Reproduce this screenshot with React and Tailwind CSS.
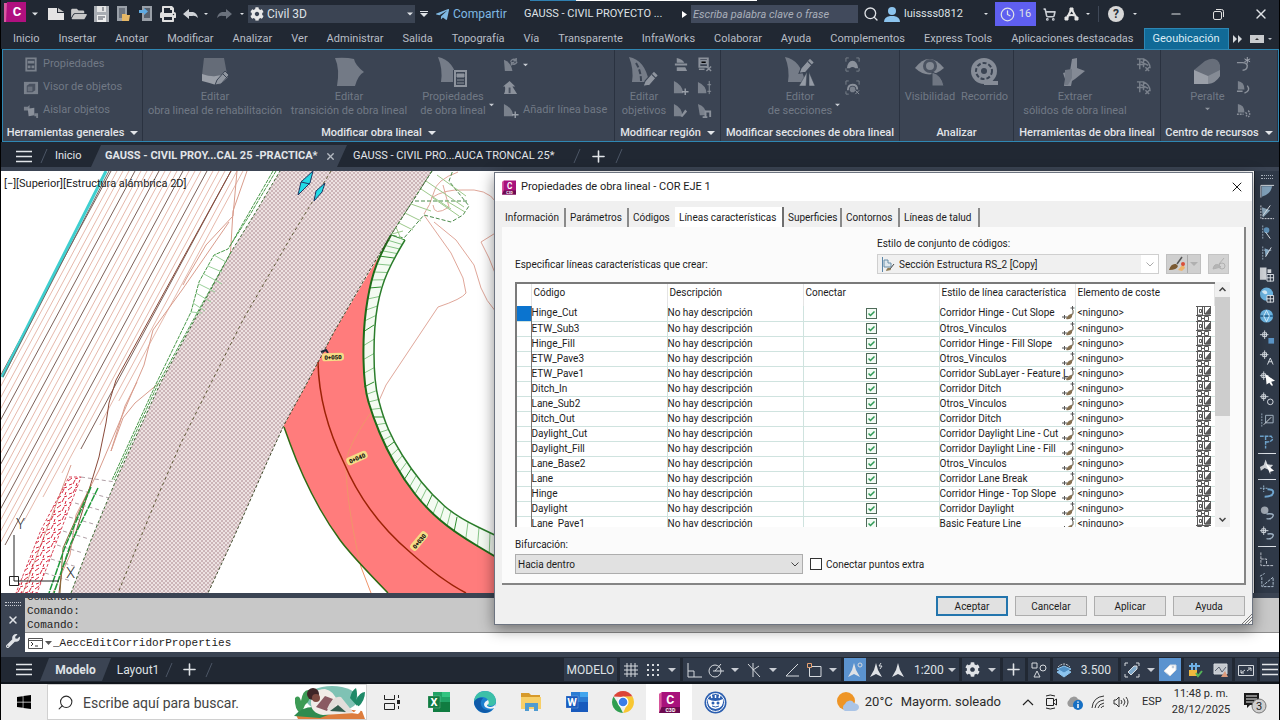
import React, { useState } from "react";
import {
  FaCog,
  FaFolderOpen,
  FaPrint,
  FaSave,
  FaTelegramPlane,
  FaUser,
  FaWindows,
  FaWrench,
} from "react-icons/fa";
import { Clock, Minus, Plus, Search, ShoppingCart, X } from "lucide-react";

const menuTabs = [
  "Inicio", "Insertar", "Anotar", "Modificar", "Analizar", "Ver", "Administrar", "Salida", "Topografía", "Vía",
  "Transparente", "InfraWorks", "Colaborar", "Ayuda", "Complementos", "Express Tools", "Aplicaciones destacadas",
];

const featureLines = [
  ["Hinge_Cut", "Corridor Hinge - Cut Slope"],
  ["ETW_Sub3", "Otros_Vinculos"],
  ["Hinge_Fill", "Corridor Hinge - Fill Slope"],
  ["ETW_Pave3", "Otros_Vinculos"],
  ["ETW_Pave1", "Corridor SubLayer - Feature L"],
  ["Ditch_In", "Corridor Ditch"],
  ["Lane_Sub2", "Otros_Vinculos"],
  ["Ditch_Out", "Corridor Ditch"],
  ["Daylight_Cut", "Corridor Daylight Line - Cut"],
  ["Daylight_Fill", "Corridor Daylight Line - Fill"],
  ["Lane_Base2", "Otros_Vinculos"],
  ["Lane", "Corridor Lane Break"],
  ["Hinge", "Corridor Hinge - Top Slope"],
  ["Daylight", "Corridor Daylight"],
  ["Lane_Pave1", "Basic Feature Line"],
];

const Caret = ({ className = "w-[8px] text-[#c9cdd4]" }) => (
  <svg className={`h-[4px] shrink-0 ${className}`} viewBox="0 0 8 4">
    <path d="M0 0h8L4 4z" fill="currentColor" />
  </svg>
);

const Slash = () => (
  <svg className="w-[8px] h-[16px] shrink-0" viewBox="0 0 8 16">
    <path d="M7 1 1 15" stroke="#4b5565" strokeWidth="1" />
  </svg>
);

const Bars = () => (
  <svg className="w-[16px] h-[13px] shrink-0" viewBox="0 0 16 13">
    <path d="M0 1.500h16M0 6.500h16M0 11.500h16" stroke="#e2e5e9" strokeWidth="1.500" />
  </svg>
);

const IconButton = ({ label, className = "", children }) => (
  <button aria-label={label} className={`flex items-center justify-center shrink-0 ${className}`}>
    {children}
  </button>
);

/* ---------- title bar ---------- */

const CivilLogo = ({ className }) => (
  <svg className={className} viewBox="0 0 24 24">
    <path d="M0 2 4 0v21l-4 3z" fill="#d7559b" />
    <path d="M3 0h21v24H0l3-3z" fill="#a8127c" />
    <path d="M3 17h21v7H0z" fill="#6d0a50" />
    <text x="13" y="14" fontSize="14" fontWeight="700" textAnchor="middle" fill="#fff" fontFamily="Roboto, sans-serif">C</text>
    <text x="13" y="23" fontSize="6" fontWeight="700" textAnchor="middle" fill="#fff" fontFamily="Roboto, sans-serif">C3D</text>
  </svg>
);

const TitleBar = () => (
  <header className="relative flex items-center h-[28px] shrink-0 bg-[#212833] text-[#dfe2e6] text-[11px] leading-[16px] pl-[3px]">
    <div className="absolute left-[529px] top-0 flex h-px w-[227px] bg-white">
      <div className="w-[46px] bg-[#2f7fb0]" />
    </div>
    <IconButton label="Menú de la aplicación" className="w-[22px] h-[22px] self-start">
      <svg className="w-[22px] h-[22px]" viewBox="0 0 22 22">
        <path d="M0 3h5v19H0z" fill="#d85aa0" />
        <path d="M3 2h19v20H2z" fill="#b0107f" />
        <text x="13" y="16" fontSize="13" fontWeight="700" textAnchor="middle" fill="#fff">C</text>
      </svg>
    </IconButton>
    <div className="w-[17px] flex justify-center"><Caret className="text-[#dfe2e6] w-[6px]" /></div>
    <div className="flex items-center gap-[6px] pl-[4px] w-[138px]">
      <IconButton label="Nuevo" className="w-[18px]">
        <svg className="w-[16px] h-[12px]" viewBox="0 0 16 12"><path d="M0 0h9v5h7v7H0z" fill="#e4e4e4" /><path d="m10 0 6 4h-6z" fill="#c4c4c4" /></svg>
      </IconButton>
      <IconButton label="Abrir" className="w-[16px]"><FaFolderOpen className="w-[16px] h-[14px] text-[#c8c8c8]" /></IconButton>
      <IconButton label="Guardar" className="w-[17px]">
        <svg className="w-[15px] h-[16px]" viewBox="0 0 15 16"><path d="M0 0h15v16H0z" fill="#a9adb3" /><path d="M3 0h9v6H3z" fill="#e4e4e4" /><path d="M3 9h9v7H3z" fill="#eee" /><path d="M4 11h7M4 13h5M9 1v4" stroke="#4a515c" /></svg>
      </IconButton>
      <IconButton label="Abrir desde web" className="w-[16px]">
        <svg className="w-[14px] h-[16px]" viewBox="0 0 14 16"><path d="M0 0h10v15H0z" fill="#9aa0a8" /><path d="M2 2h6v10H2z" fill="#6d747e" /><path d="M5 8h4l1 1h3l-1 6H5z" fill="#e6b765" /></svg>
      </IconButton>
      <IconButton label="Guardar en web" className="w-[16px]">
        <svg className="w-[14px] h-[16px]" viewBox="0 0 14 16"><path d="M3 0h10v15H3z" fill="#9aa0a8" /><path d="M5 2h6v10H5z" fill="#59616d" /><path d="M0 4h5V2l4 3.500-4 3.500V7H0z" fill="#5fa9e0" /></svg>
      </IconButton>
      <IconButton label="Imprimir" className="w-[16px]"><FaPrint className="w-[16px] h-[16px] text-[#e0e0e0]" /></IconButton>
    </div>
    <IconButton label="Deshacer" className="w-[18px]">
      <svg className="w-[15px] h-[11px]" viewBox="0 0 15 11"><path d="M6 0v3h4q4 1 5 6-3-3-6-2H6v3L0 5z" fill="#d0d3d7" /></svg>
    </IconButton>
    <div className="w-[14px] flex justify-center"><Caret className="w-[4px]" /></div>
    <IconButton label="Rehacer" className="w-[22px]">
      <svg className="w-[15px] h-[11px]" viewBox="0 0 15 11"><path d="M9 0v3H5Q1 4 0 9q3-3 6-2h3v3l6-5z" fill="#6b727d" /></svg>
    </IconButton>
    <div className="w-[13px] flex justify-center"><Caret className="w-[4px]" /></div>
    <div className="relative flex items-center w-[167px] h-[18px] bg-[#3b4453]">
      <FaCog className="absolute left-[2px] w-[14px] h-[14px] text-[#e8e8e8] pointer-events-none" />
      <select aria-label="Espacio de trabajo" className="appearance-none w-full h-full bg-transparent pl-[19px] text-[12px] outline-none">
        <option>Civil 3D</option>
      </select>
      <Caret className="absolute right-[2px] text-[#dfe2e6] w-[6px] pointer-events-none" />
    </div>
    <div className="w-[17px] flex flex-col items-center gap-px">
      <div className="w-[8px] h-px bg-[#dfe2e6]" />
      <Caret className="w-[8px] text-[#dfe2e6]" />
    </div>
    <button className="flex items-center gap-[3px] w-[92px] pl-[3px] text-[12px] text-[#7fb9e3]">
      <FaTelegramPlane className="w-[15px] h-[15px]" />
      Compartir
    </button>
    <div className="w-[158px] whitespace-nowrap">GAUSS - CIVIL PROYECTO ...</div>
    <svg className="w-[5px] h-[7px] mr-[4px] shrink-0" viewBox="0 0 5 7"><path d="M0 0v7l5-3.500z" fill="#fff" /></svg>
    <input aria-label="Buscar en la ayuda" placeholder="Escriba palabra clave o frase" className="w-[167px] h-[18px] bg-[#414a5c] px-[2px] italic placeholder:text-[#a9afba] outline-none" />
    <IconButton label="Buscar" className="w-[26px]"><Search className="w-[16px] h-[16px]" strokeWidth={2} /></IconButton>
    <button className="flex items-center gap-[4px] w-[100px]">
      <svg className="w-[16px] h-[15px]" viewBox="0 0 16 15"><circle cx="8" cy="4" r="4" fill="#8cc4ee" /><path d="M0 15q0-5 6-6h4q6 1 6 6z" fill="#8cc4ee" /></svg>
      luissss0812
    </button>
    <div className="w-[11px]"><Caret className="w-[4px]" /></div>
    <button className="flex items-center justify-center gap-[4px] w-[41px] h-[24px] bg-[#5f5ff0]">
      <Clock className="w-[15px] h-[15px]" strokeWidth={2} />16
    </button>
    <IconButton label="Tienda" className="w-[26px]"><ShoppingCart className="w-[13px] h-[13px] text-[#c9cdd4]" strokeWidth={3} /></IconButton>
    <IconButton label="Autodesk App" className="w-[18px]">
      <svg className="w-[15px] h-[14px]" viewBox="0 0 15 14" fill="none" stroke="#e4e4e4"><path d="M7.500 2 3 11M7.500 2l5 9M3 9q5-2 9 0" strokeWidth="2" /><path d="M6 1h3v3H6zM1 10h3v3H1zM11 10h3v3h-3z" fill="#e4e4e4" /></svg>
    </IconButton>
    <div className="w-[19px] flex items-center justify-end gap-[8px]"><Caret className="w-[4px]" /><div className="w-px h-[16px] bg-[#3f4857]" /></div>
    <IconButton label="Ayuda" className="w-[34px]">
      <div className="w-[16px] h-[16px] rounded-full bg-[#d8d8d8] text-[#2a303a] font-bold text-[12px]">?</div>
    </IconButton>
    <div className="w-[8px]"><Caret className="w-[4px]" /></div>
    <div className="flex-1 flex items-center justify-between pl-[28px] pr-[10px]">
      <IconButton label="Minimizar"><Minus className="w-[14px] h-[14px]" strokeWidth={2} /></IconButton>
      <IconButton label="Restaurar">
        <svg className="w-[11px] h-[11px]" viewBox="0 0 11 11" fill="none" stroke="#e0e0e0"><rect x=".5" y="2.500" width="8" height="8" rx="1.500" /><path d="M3 .5h5.500q2 0 2 2V8" /></svg>
      </IconButton>
      <IconButton label="Cerrar"><X className="w-[16px] h-[16px]" strokeWidth={2} /></IconButton>
    </div>
  </header>
);

const MenuTabs = () => (
  <nav className="flex items-center h-[21px] shrink-0 bg-[#212833] pl-[12px] gap-[19px] text-[11px] text-[#b9bec6] whitespace-nowrap">
    {menuTabs.map((tab) => (
      <button key={tab} className="pt-[2px]">{tab}</button>
    ))}
    <div className="flex flex-1 items-center -ml-[9px] h-full">
      <button className="h-full px-[8px] bg-[#116a97] border border-b-0 border-[#2d87b5] text-[#dcecf5]">Geoubicación</button>
      <svg className="w-[9px] h-[8px] ml-[4px]" viewBox="0 0 9 8"><path d="M0 0v8l4-4zM5 0v8l4-4z" fill="#d5d8dc" /></svg>
      <svg className="w-[14px] h-[8px] ml-[8px]" viewBox="0 0 14 8"><path d="M0 0h14v8H0z" fill="#c9cbce" /><path d="M5 5h4L7 3z" fill="#333" /></svg>
      <Caret className="w-[4px] ml-[4px]" />
    </div>
  </nav>
);

/* ---------- ribbon ---------- */

const Pencil = ({ x, y, s = 1 }) => (
  <g transform={`translate(${x} ${y}) scale(${s})`}>
    <path d="M0 14 2 9 10 0l4 4-8 9z" fill="#8f959f" stroke="#3b4453" />
    <path d="m8 3 4 4" stroke="#3b4453" />
  </g>
);

const Road = ({ split }) => (
  <g>
    <path d="M0 0q16 3 20 25H3Q5 12 0 0z" fill="#757c88" />
    {split && <path d="M7 6q5 8 5 18" stroke="#3b4453" strokeWidth="2" fill="none" strokeDasharray="5 2" />}
  </g>
);

const bigIcons = {
  rehab: (
    <>
      <path d="M4 1h20l3 16Q18 22 2 18z" fill="#656c78" />
      <path d="M2 17q14 5 25-1l1 4q-7 8-12 8-6-2-14-4z" fill="#9a9fa8" />
      <Pencil x={15} y={14} />
    </>
  ),
  transition: <path d="M1 1q11-1 19 1 1 6 10 13-6 3-9 14H3Q6 12 1 1z" fill="#737a86" />,
  props: (
    <>
      <Road />
      <path d="M15 13h14v17H15z" fill="#3b4453" />
      <path d="M17 14h11v15H17z" stroke="#8d939d" strokeWidth="2" fill="none" />
      <path d="M19 17h7v3h-7zM19 23h7M19 26h7" stroke="#8d939d" fill="#8d939d" />
    </>
  ),
  targets: (<><Road split /><Pencil x={14} y={14} s={1.1} /></>),
  sections: (
    <>
      <Road />
      <Pencil x={14} y={1} s={1.1} />
      <path d="m22 15-8 14h7zM24 15l6 14h-6z" fill="#959ba5" stroke="#3b4453" strokeWidth=".5" />
    </>
  ),
  eye: (
    <>
      <path d="M0 11Q14-7 29 11 14 24 0 11z" fill="#838993" />
      <circle cx="15" cy="9" r="7" fill="#4b5361" />
      <circle cx="15" cy="9" r="4" fill="#838993" />
      <path d="M17 15q10 3 12 14H17z" fill="#6f7682" stroke="#3b4453" />
    </>
  ),
  drive: (
    <>
      <circle cx="14" cy="14" r="13" fill="#868c97" />
      <circle cx="14" cy="14" r="8" fill="none" stroke="#3b4453" strokeWidth="2" strokeDasharray="4 2" />
      <circle cx="14" cy="14" r="3" fill="#3b4453" />
      <path d="M14 24h14v4H14z" fill="#868c97" />
    </>
  ),
  extract: (
    <>
      <path d="m12 2 5-1v10l8 3-10 8-3 2-1 5H4l1-7-2-6 7-2z" fill="#848a95" />
      <path d="m5 13 7-1v9l-4 7H5z" fill="#727985" />
    </>
  ),
  superelevation: (
    <>
      <path d="M1 13 12 4q12-6 15 4v11q-6 7-12 7H1z" fill="#676e7a" />
      <path d="m1 13 14 6v8H1z" fill="#9a9fa8" />
      <path d="m15 19 12-6v6q-4 7-12 8z" fill="#858b95" />
    </>
  ),
};

const BigTool = ({ icon, lines, className = "", caret }) => (
  <button className={`flex items-start justify-center shrink-0 pt-[7px] text-[11px] leading-[14px] text-[#717985] ${className}`}>
    <span className="flex flex-col items-center whitespace-nowrap">
      <svg className="w-[30px] h-[30px] mb-[3px]" viewBox="0 0 30 30">{bigIcons[icon]}</svg>
      {lines.map((l) => <span key={l}>{l}</span>)}
      {caret === "below" && <span className="pt-[3px]"><Caret className="w-[5px] text-[#8d939d]" /></span>}
    </span>
    {caret === "side" && <span className="self-end pb-[18px] pl-[3px]"><Caret className="w-[5px] text-[#c9cdd4]" /></span>}
  </button>
);

const g1 = "#7a818c";
const smallIcons = {
  properties: <><path d="M3.500 1.500h10v13h-10z" fill="none" stroke={g1} strokeWidth="2" /><path d="M5 4h7v3H5zM5 9h3v3H5zM9 9h3v3H9z" fill={g1} /></>,
  viewer: <><path d="M1 2h15v13H1z" fill={g1} /><path d="m4 6 3-2h6v7l-3 2H4z" fill="#4a5260" /><path d="M5 7h5v5H5z" fill="#6a717d" /></>,
  isolate: <><path d="M1 4h4l2-2v6H1z" fill={g1} /><path d="m5 6 7-1v8l-6 1z" fill="#8b919b" /><path d="M10 12h2v2h2v2h2v-5h-3" fill={g1} /></>,
  cycle: <><path d="M1 3q8 3 9 12H2z" fill={g1} /><path d="M8 5q2-4 6-2M15 5q-2 4-6 2M14 1v3h-3M9 9V6h3" stroke={g1} strokeWidth="1.500" fill="none" /></>,
  arrowUp: <><path d="m0 7 7-6 6 6h-3l5 8H1q2-4 1-8z" fill="#8b919b" /><path d="M6 8h2v6H6z" fill="#4a5260" /></>,
  add: <><path d="M1 1q9 4 10 13H1z" fill={g1} /><path d="M13 9v7M9.500 12.500h7" stroke="#9aa0a9" strokeWidth="1.500" /></>,
  split: <><path d="M4 1q6 1 8 5H4zM2 7h13v2H2zM4 11h9l2 4H4z" fill="#8b919b" /></>,
  edit: <><path d="M1 1q9 4 9 13H1z" fill={g1} /><path d="m8 14 5-7 2 2-5 6z" fill="#8b919b" /></>,
  sheet: <><path d="M2.500 1.500h9v9h-9z" stroke="#8b919b" strokeWidth="2" fill="none" /><path d="M4 4h6v3H4zM2 13h6M10 10l5 5M15 10l-5 5" stroke="#8b919b" strokeWidth="1.500" /></>,
  merge: <><path d="M1 2q9 4 9 12H1z" fill={g1} /><path d="M13 1v14M11 5h4M11 12h4" stroke="#8b919b" /></>,
  copy: <><path d="M1 1q9 3 9 12H3z" fill={g1} /><path d="M9 15v-6h5v6M6 15h5" stroke="#8b919b" strokeWidth="2" fill="none" /></>,
  section: <><path d="M1 5V1h3M12 1h3v4M1 12v3h3M12 15h3v-3" stroke={g1} fill="none" /><path d="M2 12q1-8 6-8t6 8h-3q-3-3-6 0z" fill="#8b919b" /></>,
  sectionEdit: <><path d="M1 5V1h3M12 1h3v4M1 12v3h3" stroke={g1} fill="none" /><path d="M3 11q0-6 5-6t5 5" fill="none" stroke="#8b919b" strokeWidth="2" /><circle cx="8" cy="10" r="3" fill={g1} /><path d="m11 11 4 4M15 11l-4 4" stroke="#8b919b" /></>,
  solid: <><path d="M1 2h7q7 3 7 10M4 2v11M1 8h8M8 2v9M5 5l8 4M10 11l4 4M14 11l-4 4" stroke={g1} strokeWidth="1.500" fill="none" /></>,
  spark: <><path d="M1 6h6q4 0 5 3 0 5-5 5" stroke="#8b919b" strokeWidth="1.500" fill="none" /><path d="M12 0v7M9 2l6 3M15 2 9 5" stroke="#a5aab3" /></>,
  curve: <><path d="M2 1q7 1 7 9H2z" fill={g1} /><path d="M1 12h6M12 6q4 5-3 8" stroke="#8b919b" strokeWidth="1.500" fill="none" /></>,
  curves: <><path d="M2 1q7 1 7 9H2z" fill={g1} /><path d="M1 12h7M10 10q3 2 0 5M13 8q3 4 0 7" stroke="#8b919b" strokeWidth="1.500" fill="none" strokeDasharray="2 1" /></>,
};

const SmallTool = ({ icon, label, caret, children }) => (
  <button aria-label={label} className="flex items-center h-[23px] gap-[4px] whitespace-nowrap text-[11px] text-[#717985]">
    <svg className="w-[16px] h-[16px]" viewBox="0 0 17 17">{smallIcons[icon]}</svg>
    {children}
    {caret && <Caret className="w-[5px] text-[#c9cdd4]" />}
  </button>
);

const Panel = ({ title, caret, className, children }) => (
  <section className={`flex flex-col border-r border-[#2a3240] ${className}`}>
    <div className="flex h-[75px]">{children}</div>
    <h2 className="flex items-center justify-center gap-[6px] h-[16px] text-[11px] font-medium text-[#e2e5e9] whitespace-nowrap">
      {title}
      {caret && <Caret className="w-[8px] text-[#e2e5e9]" />}
    </h2>
  </section>
);

const Ribbon = () => (
  <div className="flex h-[93px] shrink-0 bg-[#3b4453] border border-[#2f87b3] ml-px">
    <Panel title="Herramientas generales" caret className="w-[140px]">
      <div className="flex flex-col pt-[3px] pl-[20px]">
        <SmallTool icon="properties">Propiedades</SmallTool>
        <SmallTool icon="viewer">Visor de objetos</SmallTool>
        <SmallTool icon="isolate">Aislar objetos</SmallTool>
      </div>
    </Panel>
    <Panel title="Modificar obra lineal" caret className="w-[472px]">
      <BigTool icon="rehab" lines={["Editar", "obra lineal de rehabilitación"]} className="w-[144px]" />
      <BigTool icon="transition" lines={["Editar", "transición de obra lineal"]} className="w-[124px]" />
      <BigTool icon="props" lines={["Propiedades", "de obra lineal"]} caret="side" className="w-[92px]" />
      <div className="flex flex-col pt-[3px]">
        <SmallTool icon="cycle" label="Regenerar obra lineal" caret />
        <SmallTool icon="arrowUp" label="Dividir obra lineal" />
        <SmallTool icon="add">Añadir línea base</SmallTool>
      </div>
    </Panel>
    <Panel title="Modificar región" caret className="w-[106px]">
      <BigTool icon="targets" lines={["Editar", "objetivos"]} className="w-[58px]" />
      <div className="flex flex-col pt-[3px] w-[24px]">
        <SmallTool icon="split" label="Dividir región" />
        <SmallTool icon="add" label="Añadir regiones" />
        <SmallTool icon="edit" label="Editar región" />
      </div>
      <div className="flex flex-col pt-[3px]">
        <SmallTool icon="sheet" label="Propiedades de región" />
        <SmallTool icon="merge" label="Fusionar regiones" />
        <SmallTool icon="copy" label="Copiar región" />
      </div>
    </Panel>
    <Panel title="Modificar secciones de obra lineal" className="w-[179px]">
      <BigTool icon="sections" lines={["Editor", "de secciones"]} caret="side" className="w-[124px] pl-[42px]" />
      <div className="flex flex-col pt-[3px]">
        <SmallTool icon="section" label="Añadir secciones" />
        <SmallTool icon="sectionEdit" label="Borrar secciones" />
      </div>
    </Panel>
    <Panel title="Analizar" className="w-[114px]">
      <BigTool icon="eye" lines={["Visibilidad"]} className="w-[60px]" />
      <BigTool icon="drive" lines={["Recorrido"]} className="w-[49px]" />
    </Panel>
    <Panel title="Herramientas de obra lineal" className="w-[147px]">
      <BigTool icon="extract" lines={["Extraer", "sólidos de obra lineal"]} className="w-[122px]" />
      <div className="flex flex-col pt-[3px]">
        <SmallTool icon="solid" label="Superficies" />
        <SmallTool icon="solid" label="Líneas" />
      </div>
    </Panel>
    <Panel title="Centro de recursos" caret className="flex-1">
      <BigTool icon="superelevation" lines={["Peralte"]} caret="below" className="w-[75px] pl-[18px]" />
      <div className="flex flex-col pt-[3px]">
        <SmallTool icon="spark" label="Crear alineación" />
        <SmallTool icon="curve" label="Curva" />
        <SmallTool icon="curves" label="Curvas múltiples" />
      </div>
    </Panel>
  </div>
);

const DocTabs = () => (
  <div className="flex items-center h-[25px] pt-[3px] shrink-0 bg-[#212833] text-[11px] text-[#e2e5e9] whitespace-nowrap pl-[14px]">
    <IconButton label="Menú de archivos" className="w-[18px]"><Bars /></IconButton>
    <div className="w-[22px] flex justify-center"><Slash /></div>
    <button className="w-[36px] text-left">Inicio</button>
    <div className="flex items-center gap-[7px] w-[256px] h-full pl-[14px] font-bold bg-[#3b4453] [clip-path:polygon(10px_0,100%_0,246px_100%,0_100%)]">
      <button>GAUSS - CIVIL PROY...CAL 25 -PRACTICA*</button>
      <IconButton label="Cerrar dibujo"><X className="w-[11px] h-[11px] text-[#b5bac2]" strokeWidth={3} /></IconButton>
    </div>
    <button className="w-[226px] pl-[6px] text-left">GAUSS - CIVIL PRO...AUCA TRONCAL 25*</button>
    <Slash />
    <IconButton label="Nuevo dibujo" className="w-[34px]"><Plus className="w-[19px] h-[19px]" strokeWidth={2} /></IconButton>
    <Slash />
  </div>
);

/* ---------- drawing area ---------- */

const toPath = (pts) => "M" + pts.map((p) => p.join(" ")).join("L");

// rounds the corners of a polyline by curving between segment midpoints
const toCurve = (pts) => {
  let d = pts[0].join(" ");
  for (let i = 1; i < pts.length - 1; i++) {
    const mx = (pts[i][0] + pts[i + 1][0]) / 2;
    const my = (pts[i][1] + pts[i + 1][1]) / 2;
    d += `Q${pts[i].join(" ")} ${mx} ${my}`;
  }
  return `${d}L${pts[pts.length - 1].join(" ")}`;
};

const bandInner = [[390, 235], [378, 256], [368, 288], [362, 332], [363, 387], [372, 417], [385, 448], [403, 480], [425, 508], [453, 532], [500, 560]];
const bandOuter = [[404, 240], [393, 258], [380, 287], [373, 325], [373, 382], [382, 417], [393, 442], [410, 469], [431, 495], [456, 517], [500, 538]];

const rungs = [];
for (let i = 0; i < bandInner.length - 1; i++) {
  for (let k = 0; k < 4; k++) {
    const t = k / 4;
    const mix = (a, b) => [a[0] + (b[0] - a[0]) * t, a[1] + (b[1] - a[1]) * t];
    rungs.push([mix(bandInner[i], bandInner[i + 1]), mix(bandOuter[i], bandOuter[i + 1])]);
  }
}

const roadRight = [[431, 171], [390, 235], [370, 268], [333, 332], [305, 385], [283, 425], [267, 460], [233, 537], [207, 593]];
const roadLeft = [[70, 593], [90, 540], [115, 480], [160, 382], [200, 308], [230, 252], [253, 215], [279, 171]];
const roadAxis = [[330, 171], [290, 237], [243, 318], [210, 383], [180, 443], [155, 500], [117, 593]];
const ringEdge = [[387, 593], [350, 555], [328, 525], [310, 493], [295, 460], [283, 427]];

const contours = Array.from({ length: 23 }, (_, i) => i);

const Station = ({ x, y, angle, children }) => (
  <g transform={`translate(${x} ${y}) rotate(${angle})`}>
    <rect x="-11" y="-4" width="22" height="8" rx="3" fill="#f5dc86" />
    <text y="2.500" fontSize="6" fontWeight="900" textAnchor="middle" fill="#111" fontFamily="Roboto, sans-serif">{children}</text>
  </g>
);

const Drawing = () => (
  <svg className="absolute inset-0 w-full h-full" viewBox="0 171 1254 422" preserveAspectRatio="xMinYMin slice" fill="none">
    <defs>
      <pattern id="mesh" width="4" height="4" patternUnits="userSpaceOnUse">
        <path d="M0 0h4v4H0z" fill="#ede2e2" />
        <path d="M0 0h2v2H0zM2 2h2v2H2z" fill="#ccb5b8" />
      </pattern>
      <pattern id="slope" width="11" height="9" patternUnits="userSpaceOnUse">
        <path d="m1 4 4-3M6 7l2-4M8 2l3-1M2 8l3-1M9 9l1-3" stroke="#d8283f" />
      </pattern>
    </defs>
    <g strokeWidth="1">
      {contours.map((i) => {
        const drop = i < 15 ? 424 : 422 - (i - 14) * 24;
        return <path key={i} d={`M${110 + i * 6} 171l${-drop * 0.54} ${drop}`} stroke={i % 4 === 0 ? "#7d6058" : "#e6b9ac"} />;
      })}
      <path d="M105 171 52 276 1 377" stroke="#3fd0d0" strokeWidth="3" />
      <path d="M108 171 2 377" stroke="#6f6a66" />
      <path d="M230 171 115 380l-7 23-3 20-7 34-10 33-14 45-13 35-3 23" stroke="#8a4a3a" />
      <path d="m236 171-4 45-27 29-20 34-3 6M246 171l-14 40-3 50M228 222l-47 68-29 40-9 35-13 30-32 75-23 45-6 40-18 40M158 383l-24 20-12 15-12 33 14-45 12-24M70 465l-34 90-14 38" stroke="#d99c8c" />
      <path d="M457 172q-22 8-24 20-4 14-10 22M430 198q14-9 32-8 24-2 33 12M432 205q1 12 16 2l-6-22M423 215l27 38 12 25 3 15q-4 6-28 14l-52 78-8 18M433 222l22 18 18 25 7 23q5 13 15 24M496 232l-16 10 8 16 8 20" stroke="#e0a79a" />
    </g>
    <path d={`${toPath([...roadRight, ...roadLeft])}Z`} fill="url(#mesh)" />
    <path
      d={`${toPath([[378, 256], ...roadRight.slice(3, 6)])}L${toCurve([...ringEdge].reverse())}L500 593L${toCurve([...bandInner.slice(1)].reverse())}Z`}
      fill="#ff7c7c"
    />
    <path d="M377 403q-30 40-32 60 0 40 15 104l10 26" stroke="#f0956a" />
    <path d={`M${toCurve(bandInner)}L${toCurve([...bandOuter].reverse())}Z`} fill="#f4fbf2" />
    {rungs.map(([a, b], i) => (
      <path key={i} d={toPath([a, b])} stroke={i % 4 === 0 ? "#2f8f2f" : "#86c486"} />
    ))}
    <path d={`M${toCurve(bandInner)}`} stroke="#1d6b17" strokeWidth="2" />
    <path d={`M${toCurve(bandOuter)}`} stroke="#2b7d2b" strokeWidth="1.500" />
    <path d={`M${toCurve(ringEdge)}`} stroke="#2d6b14" strokeWidth="1.500" />
    <path d="M317 362Q318 412 343 463 365 515 410 553 440 580 465 593" stroke="#9c2206" strokeWidth="1.500" />
    <path d={toPath(roadAxis)} stroke="#5f5a35" strokeDasharray="3 3" />
    <path d={toPath(roadRight)} stroke="#3f4a2a" strokeDasharray="3 2" />
    <path d={toPath(roadLeft)} stroke="#3f6a35" strokeDasharray="3 2" />
    <g stroke="#3fa83f">
      <path d="M275 171 250 213 227 249 213 255 198 282 190 312 155 384 111 480M272 171l-43 75M230 252l-30 54-43 78-44 96" stroke="#4a9a4a" strokeDasharray="4 1" />
      <path d="m213 255 12 7M207 266l14 6M203 274l18 10M198 284l16 8M195 293l15 9M192 303l12 8M190 312l11 1" stroke="#9ad09a" />
      <path d="M431 171 390 235l13 3 20-23 27 7 12-7 6-9-20-25 4-11M414 201h52" strokeDasharray="4 2" stroke="#4a8a4a" />
      <path d="m425 181 38 26M420 189l30 20M436 175l29 21M410 204l20 7M404 213l16 8M398 223l14 7M444 200l20 12M432 198l26 18M391 234l11-3M395 227l5 12" stroke="#9cc88a" />
    </g>
    <path d="M68 477h12L60 530 36 593H15l25-63z" fill="url(#slope)" stroke="#d8485a" strokeDasharray="3 2" />
    <path d="m80 477 34 5M78 490l30 8M74 503l28 8M68 517l28 8M62 531l26 8M56 545l26 8M50 559l26 8M44 573l26 8" stroke="#b0a0a6" strokeDasharray="4 3" />
    <path d="m90 485-28 63-3 45" stroke="#8a6a3a" />
    <path d="m97 488-27 55-17 50M90 487l-26 60-16 46" stroke="#1f9a3a" strokeWidth="1.500" strokeDasharray="7 1" />
    <path d="m312 171-3 12-12 12 3-13zM324 183l-3 9-8 9 2-10z" fill="#22dbe6" stroke="#1f3a66" />
    <path d="m300 182 9 2" stroke="#1f3a66" />
    <path d="m320 352 5-2 2 3" stroke="#1f2a3a" strokeWidth="2" />
    <Station x={332} y={357} angle={-2}>0+050</Station>
    <Station x={356} y={458} angle={-24}>0+040</Station>
    <Station x={418} y={541} angle={-50}>0+030</Station>
    <path d="M13 535v46h45M8.500 576.500h9v9h-9z" stroke="#222" />
    <g fill="#333" fontSize="15" fontFamily="Roboto, sans-serif" fontWeight="300">
      <text x="15" y="529">Y</text>
      <text x="65" y="578">X</text>
    </g>
  </svg>
);

const sideTools = [
  ["Ángulo", <><path d="M2 15V2h14" stroke="#dce1e8" /><path d="M3 3h11Q12 12 3 14z" fill="#7f9fb8" /></>],
  ["Distancia", <><path d="M2 1v14h14" stroke="#dce1e8" strokeDasharray="2 1" /><path d="m3 3 9 3-8 8z" fill="#8ba5b8" /><path d="M12 1 4 12" stroke="#dce1e8" /></>],
  ["Línea", <><path d="M4 1v14" stroke="#9fb2c4" strokeDasharray="2 1" /><circle cx="8" cy="6" r="3" fill="#5d8fb6" /><path d="m7 8 5 7" stroke="#dce1e8" /></>],
  ["Desfase", <><path d="M4 1v14M5 5h9" stroke="#9fb2c4" strokeDasharray="2 1" /><path d="m6 3 5 2-4 7z" fill="#86aac6" /><path d="M13 2 7 12" stroke="#dce1e8" /></>],
  ["Cuadrícula", <><path d="M1 1h7v13H1zM9 3h4v4H9z" fill="#d0d4d9" /><path d="M8.500 8.500h7v7h-7zM12 8v8M8 12h8" stroke="#dce1e8" fill="#2f3948" /></>],
  ["Globo", <><circle cx="8" cy="7" r="7" fill="#6bb3e0" /><path d="M3 4q5-3 6 2-4 3-6-2z" fill="#d6ecf8" /><path d="M8.500 8.500h7v7h-7zM12 8v8M8 12h8" stroke="#dce1e8" fill="#2f3948" /></>],
  ["Latitud", <><circle cx="8" cy="8" r="7" fill="#6bb3e0" /><path d="M1 8h14" stroke="#2f6e9c" strokeWidth="2" /><path d="m8 2-3 6 3 6 3-6z" stroke="#d9eefa" /></>],
  ["Punto", <><path d="M6 1v9M1 5.500h9M4 3.500h4v4H4z" stroke="#dce1e8" /><path d="M10 9h6v6h-6z" fill="#5a93c4" /></>],
  ["Punto A", <><path d="M6 1v9M1 5.500h9M4 3.500h4v4H4z" stroke="#dce1e8" /><path d="m9 16 3-7 3 7M10 13h4" stroke="#dce1e8" /></>],
  ["Seleccionar", <><path d="M5 1v9M1 5.500h9M3 3.500h4v4H3z" stroke="#dce1e8" /><path d="m7 4 10 7-4 1 2 4h-2l-2-3-3 2z" fill="#fff" /></>],
  ["Zoom a punto", <><path d="M5 1v9M1 5.500h9M3 3.500h4v4H3z" stroke="#dce1e8" /><circle cx="12" cy="11" r="3" stroke="#dce1e8" /></>],
  ["Rectángulo", <><path d="M3 1v14" stroke="#9fb2c4" strokeDasharray="2 1" /><path d="M7 3h8v8H7z" stroke="#a7b7c6" /><path d="m5 13 8-8" stroke="#dce1e8" /></>],
  ["P", <path d="M1 3h12q4 5-4 6H7M7 3v13" stroke="#6fa5cf" strokeWidth="1.500" strokeDasharray="4 1" />],
  null,
  ["Marca", <><path d="m1 9 4-2 2-6 2 5 6 1-5 5-4-2-4 3z" fill="#d0d4d9" /><path d="m7 5 9 8-4 1v3z" fill="#fff" /></>],
  null,
  ["Giro", <><path d="M1 4h8M5 1v7" stroke="#9fc2dd" strokeDasharray="2 1" /><path d="M9 5q7 0 6 4-1 4-9 4" stroke="#6fa5cf" strokeWidth="2" /></>],
  ["Giro libre", <><circle cx="6" cy="5" r="4" fill="#a0a8b2" /><path d="M8 9q8-1 7 2-1 4-7 3" stroke="#9fb2c4" strokeWidth="1.500" /></>],
  ["Giro punto", <><path d="M5 1v9M1 5.500h9M3 3.500h4v4H3z" stroke="#dce1e8" /><path d="M9 9q7-1 6 2-1 4-7 3" stroke="#9fb2c4" strokeWidth="1.500" /></>],
  null,
  ["Escuadra", <path d="M2 1v14h13M2 8h6v6" stroke="#c5ccd5" strokeDasharray="3 1" />],
  ["Polígono", <path d="M3 5v10h12V5L4 14M1 4l5-3" stroke="#b5c6d6" strokeDasharray="3 1" />],
];

const SideToolbar = () => (
  <aside className="flex flex-col items-center justify-between w-[25px] shrink-0 bg-[#2f3948] py-[4px] border-l border-[#1d242e]">
    <div className="w-[12px] h-[4px] shrink-0 border-y border-dotted border-[#aab2bd]" />
    {sideTools.map((tool, i) =>
      tool ? (
        <IconButton key={i} label={tool[0]}>
          <svg className="w-[16px] h-[17px]" viewBox="0 0 17 17" fill="none">{tool[1]}</svg>
        </IconButton>
      ) : (
        <div key={i} className="w-[18px] h-px bg-[#dce1e8] shrink-0" />
      )
    )}
  </aside>
);

/* ---------- command line and status bar ---------- */

const CommandLine = () => (
  <div className="flex shrink-0 h-[64px] py-[5px] bg-[#3b4453]">
    <div className="flex flex-col items-center justify-between w-[24px] py-[4px]">
      <div className="w-[16px] h-[4px] border-y border-dotted border-[#c9cdd4]" />
      <IconButton label="Cerrar línea de comandos"><X className="w-[12px] h-[12px] text-[#dfe2e6]" strokeWidth={3} /></IconButton>
      <IconButton label="Personalizar"><FaWrench className="w-[14px] h-[14px] text-[#dfe2e6]" /></IconButton>
    </div>
    <div className="flex flex-col flex-1 font-['Liberation_Mono',monospace] text-[11px] text-[#222]">
      <div className="flex flex-col justify-end h-[35px] overflow-hidden bg-[#c8c8c8] pl-[2px] leading-[14px] border-b border-[#8c8c8c]">
        <div>Comando:</div>
        <div>Comando:</div>
        <div>Comando:</div>
      </div>
      <div className="flex items-center flex-1 bg-white pl-[3px] pt-[2px]">
        <svg className="w-[25px] h-[13px] shrink-0" viewBox="0 0 25 13"><path d="M.5 1.500h14v10H.5zM.5 3.500h14" stroke="#555" fill="none" /><path d="m3 5 2 2-2 2M7 9h3" stroke="#333" fill="none" /><path d="M17 4h7l-3.500 4z" fill="#555" /></svg>
        <input aria-label="Comando" defaultValue="_AeccEditCorridorProperties" className="flex-1 bg-transparent outline-none" />
      </div>
    </div>
  </div>
);

const StatusGroup = ({ className = "", children }) => (
  <div className={`flex items-center justify-center h-[23px] shrink-0 bg-[#303a4a] ${className}`}>{children}</div>
);

const StatusIcon = ({ label, active, children }) => (
  <IconButton label={label} className={`h-full w-[22px] ${active ? "bg-[#5b93cf]" : ""}`}>
    <svg className="w-[16px] h-[16px]" viewBox="0 0 16 16" fill="none" stroke="#d5d9de">{children}</svg>
  </IconButton>
);

const Star = <path d="M7 1 5 8l-4 7 6-3 6 3-4-7z" fill="#dfe2e6" stroke="none" />;
const StatusCaret = () => <div className="flex justify-center w-[16px]"><Caret /></div>;

const StatusBar = () => (
  <div className="flex items-center h-[27px] shrink-0 bg-[#212833] border-b-2 border-[#10151c] text-[12px] text-[#dfe2e6] whitespace-nowrap pl-[14px]">
    <IconButton label="Menú de presentaciones" className="w-[18px]"><Bars /></IconButton>
    <div className="flex items-center justify-center w-[71px] h-[23px] ml-[7px] font-bold bg-[#3b4453] [clip-path:polygon(9px_0,100%_0,62px_100%,0_100%)]">
      <button>Modelo</button>
    </div>
    <button className="w-[54px] text-center">Layout1</button>
    <Slash />
    <IconButton label="Nueva presentación" className="w-[32px]"><Plus className="w-[19px] h-[19px]" /></IconButton>
    <Slash />
    <div className="flex items-center justify-end flex-1 gap-[3px]">
      <StatusGroup className="w-[53px]"><button>MODELO</button></StatusGroup>
      <StatusGroup>
        <StatusIcon label="Rejilla"><path d="M4 1v14M8 1v14M12 1v14M1 4h14M1 8h14M1 12h14" /></StatusIcon>
        <StatusIcon label="Forzado a rejilla"><path d="M3 2v13M8 2v13M13 2v13" strokeWidth="2" strokeDasharray="2 3" /></StatusIcon>
        <StatusCaret />
      </StatusGroup>
      <StatusGroup>
        <StatusIcon label="Orto"><path d="M2 1v14h14M2 9h6v6" /></StatusIcon>
        <StatusIcon label="Polar"><circle cx="7" cy="9" r="6" /><path d="M5 9h11M7 9l6-7" /></StatusIcon>
        <StatusCaret />
        <StatusIcon label="Isométrico"><path d="m2 2 12 13M7 1v14M7 8l6-4" /></StatusIcon>
        <StatusCaret />
        <StatusIcon label="Rastreo"><path d="M14 2 2 14h13" /></StatusIcon>
        <StatusIcon label="Referencia a objetos"><path d="M6 4.500h9v10H3.500V6" /><path d="M1.500 1.500h4v4h-4z" stroke="#e5a070" /></StatusIcon>
        <StatusCaret />
      </StatusGroup>
      <StatusGroup>
        <StatusIcon label="Visibilidad de anotación" active>{Star}<circle cx="13" cy="3" r="2" /></StatusIcon>
        <StatusIcon label="Escala automática">{Star}<path d="m12 1-2 3h3l-2 3" /></StatusIcon>
        <StatusIcon label="Escala">{Star}</StatusIcon>
        <button className="flex items-center gap-[4px] pl-[4px] pr-[3px]">1:200 <Caret /></button>
      </StatusGroup>
      <StatusGroup>
        <IconButton label="Configuración" className="w-[22px]"><FaCog className="w-[15px] h-[15px]" /></IconButton>
        <StatusCaret />
      </StatusGroup>
      <StatusGroup><IconButton label="Añadir" className="w-[22px]"><Plus className="w-[19px] h-[19px]" /></IconButton></StatusGroup>
      <StatusGroup><StatusIcon label="Aislar"><path d="M1 1h5v5H1zM3 15l3-6 3 6z" /><circle cx="12" cy="6" r="3" /></StatusIcon></StatusGroup>
      <StatusGroup className="gap-[6px] pr-[7px]">
        <StatusIcon label="Capas"><path d="m1 10 7-3 7 3-7 5z" fill="#8cc4ee" stroke="#8cc4ee" /><path d="m1 7 7-3 7 3-7 4z" fill="#4f8fc4" stroke="#8cc4ee" /><path d="M2 5q6-6 12 0" strokeDasharray="2 1" /></StatusIcon>
        3.500
      </StatusGroup>
      <StatusGroup>
        <StatusIcon label="Etiquetas"><path d="M1 4V1h3M12 1h3v3M1 12v3h3M12 15h3v-3" /><path d="m4 10 6-6h3v3l-6 6z" fill="#7fa8c9" /></StatusIcon>
        <StatusCaret />
        <StatusIcon label="Etiqueta" active><path d="m2 9 6-6h6v5l-6 6z" fill="#fff" /><circle cx="11" cy="5" r="1" fill="#5b93cf" /></StatusIcon>
      </StatusGroup>
      <StatusGroup className="gap-[4px]">
        <StatusIcon label="Rendimiento"><path d="M2 4h11M5 1v7M9 1v7" stroke="#6fb1e6" strokeWidth="2" /><path d="M2 8h8v6H2z" fill="#efb93f" stroke="none" /><path d="m9 11 2 3 4-5" stroke="#55b558" strokeWidth="2" /></StatusIcon>
        <StatusIcon label="Gráficos"><path d="M1 2h13v10H1z" fill="#c5c9cf" /><path d="m2 9 4-4 3 5 4-5" stroke="#5a6270" /><path d="m8 15 4-6 3 6z" fill="#dc9b7c" stroke="none" /></StatusIcon>
      </StatusGroup>
      <StatusGroup><StatusIcon label="Pantalla limpia"><path d="M.5 3.500h15v10H.5z" /><path d="m3 11 4-3M3 8v3h3M13 6 9 9M10 6h3v3" /></StatusIcon></StatusGroup>
      <StatusGroup><IconButton label="Personalización" className="w-[19px]"><Bars /></IconButton></StatusGroup>
    </div>
  </div>
);

/* ---------- dialog ---------- */

const dialogTabs = [
  ["Información", "w-[65px]"],
  ["Parámetros", "w-[63px]"],
  ["Códigos", "w-[46px]"],
  ["Líneas características", "w-[109px]"],
  ["Superficies", "w-[58px]"],
  ["Contornos", "w-[58px]"],
  ["Líneas de talud", "w-[80px]"],
];

const StyleBrush = () => (
  <svg className="w-[13px] h-[14px]" viewBox="0 0 13 14" fill="none">
    <path d="M0 11h5M2.500 9v4M8.500 2h4M10.500 0v4" stroke="#555" />
    <path d="M11 4v3l-2 3" stroke="#8f8a80" strokeWidth="1.500" />
    <path d="M10 8q-4 0-6 5 4 1 6-2z" fill="#857050" />
  </svg>
);

const CostIcon = () => (
  <svg className="w-[15px] h-[15px] shrink-0" viewBox="0 0 15 15" fill="none" stroke="#5a5a5a">
    <path d="M0 .5h15M1.500 1v8h5V1M3.500 3.500h2v3h-2zM8.500 1v7h6V1" />
    <path d="m9 8 5-6v6z" fill="#5a5a5a" />
    <path d="M1.500 10.500h4v4h-4zM8.500 10.500h4v4h-4zM0 9.500h15M6 12.500h2" />
  </svg>
);

const FeatureTable = () => {
  const [checked, setChecked] = useState(featureLines.map(() => true));
  const toggle = (i) => setChecked(checked.map((c, k) => (k === i ? !c : c)));

  return (
    <div className="flex h-[245px]">
      <div className="flex-1 overflow-hidden border-t-2 border-l-2 border-[#7a7a7a] bg-white">
        <table className="w-full table-fixed border-collapse text-left whitespace-nowrap">
          <colgroup>
            <col className="w-[14px]" />
            <col className="w-[136px]" />
            <col className="w-[136px]" />
            <col className="w-[136px]" />
            <col className="w-[136px]" />
            <col />
          </colgroup>
          <thead>
            <tr className="h-[22px] leading-[18px] align-top">
              <th className="border-r border-[#e4e4e4]" />
              {["Código", "Descripción", "Conectar", "Estilo de línea característica", "Elemento de coste"].map((h) => (
                <th key={h} className="pl-[2px] font-normal border-r border-[#e4e4e4]">{h}</th>
              ))}
            </tr>
          </thead>
          <tbody>
            {featureLines.map(([code, style], i) => (
              <tr key={code} className="h-[15px] leading-[14px] border-b border-[#cfe3df]">
                <td className={`border-r border-[#777] ${i === 0 ? "bg-[#0b74cf]" : ""}`} />
                <td className="border-r border-[#cfe3df]">{code}</td>
                <td className="border-r border-[#cfe3df]">No hay descripción</td>
                <td className="border-r border-[#cfe3df]">
                  <span className="relative flex justify-center">
                    <input
                      type="checkbox"
                      aria-label={`Conectar ${code}`}
                      checked={checked[i]}
                      onChange={() => toggle(i)}
                      className="peer appearance-none w-[11px] h-[11px] border border-[#4f6b5a] bg-[#f2faf4]"
                    />
                    <svg className="absolute top-[3px] w-[7px] h-[6px] pointer-events-none hidden peer-checked:block" viewBox="0 0 7 6">
                      <path d="m.5 2.500 2 2 4-4" stroke="#2f9a55" strokeWidth="1.500" fill="none" />
                    </svg>
                  </span>
                </td>
                <td className="border-r border-[#cfe3df]">
                  <span className="relative flex">
                    {style}
                    <span className="absolute right-0"><StyleBrush /></span>
                  </span>
                </td>
                <td className="pl-[2px] pr-[4px]">
                  <span className="flex items-center justify-between h-[14px]">&lt;ninguno&gt;<CostIcon /></span>
                </td>
              </tr>
            ))}
          </tbody>
        </table>
      </div>
      <div className="flex flex-col items-center w-[15px] pt-[5px] pb-[5px] bg-[#f0f0f0]">
        <svg className="w-[7px] h-[5px] mb-[5px]" viewBox="0 0 7 5"><path d="m.5 4 3-3 3 3" stroke="#444" strokeWidth="1.500" fill="none" /></svg>
        <div className="w-full h-[119px] bg-[#cdcdcd]" />
        <svg className="w-[7px] h-[5px] mt-auto" viewBox="0 0 7 5"><path d="m.5 1 3 3 3-3" stroke="#444" strokeWidth="1.500" fill="none" /></svg>
      </div>
    </div>
  );
};

const Dialog = () => {
  const [tab, setTab] = useState("Líneas características");

  return (
    <div role="dialog" aria-labelledby="dialog-title" className="absolute right-[27px] top-[172px] w-[759px] pb-[8px] bg-[#f0f0f0] border border-[#6d7480] shadow-[0_4px_14px_rgba(0,0,0,0.45)] text-[10px] text-[#1c1c1c]">
      <div className="flex items-center h-[28px] pl-[7px] pr-[7px] bg-white">
        <CivilLogo className="w-[14px] h-[15px]" />
        <h1 id="dialog-title" className="flex-1 pl-[5px] text-[11px]">Propiedades de obra lineal - COR EJE 1</h1>
        <IconButton label="Cerrar"><X className="w-[16px] h-[16px]" strokeWidth={1.5} /></IconButton>
      </div>

      <div className="flex items-end h-[26px] pl-[6px]" role="tablist">
        {dialogTabs.map(([name, w]) => (
          <button
            key={name}
            role="tab"
            aria-selected={tab === name}
            onClick={() => setTab(name)}
            className={`pl-[4px] text-left whitespace-nowrap ${w} ${
              tab === name
                ? "h-[20px] bg-white border-r-2 border-[#6f6f6f]"
                : name === "Códigos"
                  ? "h-[19px]"
                  : "h-[19px] border-r-2 border-[#8a8a8a]"
            }`}
          >
            {name}
          </button>
        ))}
      </div>

      <div className="ml-[7px] mr-[6px] px-[13px] pt-[9px] pb-[9px] bg-[#fbfbfb] border-r-2 border-b-2 border-[#858585]">
        <div className="flex items-end justify-between">
          <div className="pb-[2px]">Especificar líneas características que crear:</div>
          <div className="w-[354px]">
            <label htmlFor="code-style" className="block leading-[16px]">Estilo de conjunto de códigos:</label>
            <div className="flex items-center gap-[7px] pt-[2px]">
              <div className="relative flex items-center w-[282px] h-[20px] bg-[#f0f0f0] border border-[#cfcfcf]">
                <svg className="absolute left-[3px] w-[14px] h-[15px]" viewBox="0 0 14 15" fill="none"><path d="M1.500 0v15" stroke="#5b86a8" /><path d="M3 3h4v3h3v4H3z" stroke="#6a8fa8" fill="#dfe8ee" /><path d="m13 7-4 5" stroke="#444" /><path d="M5 14q1-4 4-3l1 2z" fill="#8c7a55" /></svg>
                <select id="code-style" className="appearance-none w-full h-full bg-transparent pl-[21px] outline-none">
                  <option>Sección Estructura RS_2 [Copy]</option>
                </select>
                <span className="absolute right-0 flex items-center justify-center w-[17px] h-full bg-white pointer-events-none">
                  <svg className="w-[8px] h-[5px]" viewBox="0 0 8 5"><path d="m.5 .5 3.500 3.500 3.500-3.500" stroke="#aaa" fill="none" /></svg>
                </span>
              </div>
              <button aria-label="Editar estilo" className="flex items-center w-[35px] h-[20px] bg-[#cfcfcf] border border-[#c0c0c0]">
                <svg className="w-[20px] h-[16px]" viewBox="0 0 20 16"><path d="m15 1-5 7" stroke="#555" strokeWidth="1.500" /><path d="M2 14q2-7 7-6l2 2q-1 4-9 4z" fill="#7b5a33" /><path d="m11 14 5-6 2 4-3 3z" fill="#efb46a" /><circle cx="16" cy="8" r="2" fill="#d94f3a" /></svg>
                <span className="flex-1 flex justify-center items-center h-full border-l border-[#aaa]"><Caret className="w-[8px] text-[#b0b0b0]" /></span>
              </button>
              <IconButton label="Ver estilo" className="w-[21px] h-[20px] bg-[#d2d2d2] border border-[#c4c4c4]">
                <svg className="w-[16px] h-[14px]" viewBox="0 0 16 14" fill="none" stroke="#b0b0b0"><path d="m13 1-5 6M2 12q1-6 6-4l2 2z" fill="#b5b5b5" /><circle cx="11" cy="9" r="3" /></svg>
              </IconButton>
            </div>
          </div>
        </div>

        <div className="pt-[8px] pr-[1px]"><FeatureTable /></div>

        <label htmlFor="branching" className="block pt-[9px] leading-[18px]">Bifurcación:</label>
        <div className="flex items-center gap-[7px]">
          <div className="relative flex items-center w-[288px] h-[20px]">
            <select id="branching" className="appearance-none w-full h-full bg-[#e1e1e1] border border-[#adadad] px-[2px] outline-none">
              <option>Hacia dentro</option>
            </select>
            <svg className="absolute right-[4px] w-[8px] h-[5px] pointer-events-none" viewBox="0 0 8 5"><path d="m.5 .5 3.500 3.500 3.500-3.500" stroke="#444" fill="none" /></svg>
          </div>
          <label className="flex items-center gap-[4px]">
            <input type="checkbox" className="appearance-none w-[12px] h-[12px] bg-white border border-[#333] checked:bg-[#0b74cf]" />
            Conectar puntos extra
          </label>
        </div>
      </div>

      <div className="flex justify-end gap-[7px] pt-[11px] pr-[7px]">
        <button className="w-[72px] h-[20px] bg-[#e1e1e1] border-2 border-[#2375ad]">Aceptar</button>
        {["Cancelar", "Aplicar", "Ayuda"].map((name) => (
          <button key={name} className="w-[72px] h-[20px] bg-[#e1e1e1] border border-[#adadad]">{name}</button>
        ))}
      </div>
      <svg className="absolute right-0 bottom-0 w-[10px] h-[10px]" viewBox="0 0 10 10"><path d="m0 10 10-10M3 10l7-7M6 10l4-4" stroke="#777" /></svg>
    </div>
  );
};

/* ---------- taskbar ---------- */

const OfficeIcon = ({ letter, dark, mid, light }) => (
  <svg className="w-[24px] h-[22px]" viewBox="0 0 24 22">
    <path d="M6 1h9v10H6z" fill={mid} />
    <path d="M15 1h8v5h-8z" fill={light} />
    <path d="M6 6h17v5H6z" fill={mid} />
    <path d="M6 11h17v10H6z" fill={dark} />
    <path d="M1 5h12v12H1z" fill={dark} stroke="#ffffff33" />
    <text x="7" y="15" fontSize="11" fontWeight="700" textAnchor="middle" fill="#fff" fontFamily="Roboto, sans-serif">{letter}</text>
  </svg>
);

const apps = [
  ["Excel", <OfficeIcon letter="X" dark="#107c41" mid="#21a366" light="#33c481" />],
  ["Edge", (
    <svg className="w-[24px] h-[24px]" viewBox="0 0 24 24">
      <circle cx="12" cy="12" r="11" fill="#1b7fcf" />
      <path d="M1 12Q2 1 13 1q9 1 10 10 0 5-6 5-3 0-2-3 1-5-5-6-6 0-9 5z" fill="#3cc0a8" />
      <path d="M1 12q3-5 9-4-4 4-1 9 3 4 10 3-7 6-14 0-4-4-4-8z" fill="#0f5aa8" />
      <path d="M15 10q2 4-1 5 0 2 4 2 4-1 5-4l-1 5q-6 2-10-1-3-4 3-7z" fill="#eef4f8" />
    </svg>
  )],
  ["Explorador de archivos", (
    <svg className="w-[22px] h-[20px]" viewBox="0 0 22 20">
      <path d="M1 1h8l2 2h9v5H1z" fill="#d79a2b" />
      <path d="M1 5h20v12H1z" fill="#f7cf68" />
      <path d="M5 11h13v8h-4v-4H9v4H5z" fill="#4f9bd0" />
    </svg>
  )],
  ["Word", <OfficeIcon letter="W" dark="#185abd" mid="#2b7cd3" light="#41a5ee" />],
  ["Chrome", (
    <svg className="w-[24px] h-[24px]" viewBox="0 0 24 24">
      <path d="M2.500 6.500A11 11 0 0 1 21.500 6.500L12 7z" fill="#dc4437" />
      <path d="M2.500 6.500 8 15l4 8A11 11 0 0 1 2.500 6.500z" fill="#2f9e4f" />
      <path d="M21.500 6.500H12l4 8-4 8.500a11 11 0 0 0 9.500-16.500z" fill="#f8c732" />
      <circle cx="12" cy="12" r="5.500" fill="#fff" />
      <circle cx="12" cy="12" r="4.300" fill="#3b7de8" />
    </svg>
  )],
  ["Civil 3D", <CivilLogo className="w-[21px] h-[23px]" />],
  ["Asistente", (
    <svg className="w-[23px] h-[23px]" viewBox="0 0 23 23">
      <circle cx="11.500" cy="11.500" r="11" fill="#2c5fb0" />
      <circle cx="11.500" cy="11.500" r="9" fill="none" stroke="#fff" />
      <path d="M4 8q7 4 15 0 1 9-7.500 10Q3 17 4 8z" fill="#fff" />
      <circle cx="9" cy="12" r="1.500" fill="#2c5fb0" /><circle cx="14" cy="12" r="1.500" fill="#2c5fb0" />
      <path d="M8 15q3.500 2 7 0" stroke="#2c5fb0" fill="none" />
      <path d="M7 4l1 3M11.500 4v3M16 4l-1 3" stroke="#fff" strokeWidth="1.500" />
    </svg>
  )],
];

const Taskbar = () => (
  <footer className="flex items-center h-[36px] shrink-0 bg-[#eeeeee] text-[#2b2b2b] whitespace-nowrap">
    <IconButton label="Inicio" className="w-[46px]"><FaWindows className="w-[16px] h-[16px] text-black" /></IconButton>
    <label className="flex items-center w-[320px] h-full bg-white border border-[#d0d0d0] pl-[9px]">
      <Search className="w-[17px] h-[17px] -scale-x-100" strokeWidth={1.5} />
      <input aria-label="Buscar" placeholder="Escribe aquí para buscar." className="flex-1 min-w-0 pl-[9px] pt-[2px] text-[14px] outline-none placeholder:text-[#444]" />
      <svg className="w-[72px] h-[34px] shrink-0" viewBox="0 0 72 34">
        <ellipse cx="38" cy="14" rx="26" ry="13" fill="#7fc2b4" />
        <path d="M1 13q4-4 6 3 2-12 8-11 3 10-4 15l-4 9Q0 24 1 13z" fill="#3d9b55" />
        <path d="M56 13q2-8 6-10 2 6 0 12 4-8 9-8 0 9-7 15z" fill="#1f8a68" />
        <path d="M2 30q34-9 66-4l3 8H4z" fill="#dd7d3d" />
        <path d="M0 31q10-12 28-8l14 4-16 6z" fill="#2e8b4f" />
        <path d="M17 18q0-14 14-14 9 2 12 12l18 12-32 2q-12-2-12-12z" fill="#f1ece8" />
        <circle cx="19" cy="9" r="6" fill="#3f2526" />
        <circle cx="22" cy="13" r="4" fill="#7d4a40" />
        <path d="m22 22 9-11 8 3-6 12z" fill="#8a5a63" />
        <path d="M33 24q6-14 14-12l12 15-9 1-8-9-3 8z" fill="#e3dedb" />
        <path d="m36 26 8-6 8 7z" fill="#315b4d" />
        <path d="M58 28q6-2 5-8 7 4 1 9z" fill="#fff" />
      </svg>
    </label>
    <IconButton label="Vista de tareas" className="w-[49px]">
      <svg className="w-[16px] h-[16px]" viewBox="0 0 16 16" fill="none" stroke="#222"><path d="M.5 1v4.500h10V1M.5 15.500v-6h10v6zM14.500 1v3M14.500 12v3" /><path d="M13 6h3v4h-3z" fill="#222" stroke="none" /></svg>
    </IconButton>
    <div className="flex h-full">
      {apps.map(([name, icon]) => (
        <IconButton key={name} label={name} className={`w-[46px] h-full ${name === "Civil 3D" ? "bg-white" : ""}`}>{icon}</IconButton>
      ))}
    </div>
    <div className="flex items-center justify-end flex-1 pr-[12px]">
      <button className="flex items-center text-[13px]">
        <svg className="w-[28px] h-[22px] pr-[5px]" viewBox="0 0 23 20"><circle cx="9" cy="9" r="9" fill="#ee9526" /><path d="M8 19a4 4 0 0 1 0-7 5 5 0 0 1 9-1q5 1 5 4t-4 4z" fill="#aac4e6" /></svg>
        20°C<span className="pl-[8px]">Mayorm. soleado</span>
      </button>
      <div className="flex items-center gap-[8px] pl-[21px] pr-[12px]">
        <svg className="w-[12px] h-[7px] mr-[2px]" viewBox="0 0 12 7"><path d="m1 6 5-5 5 5" stroke="#222" fill="none" strokeWidth="1.200" /></svg>
        <svg className="w-[14px] h-[16px]" viewBox="0 0 14 16" fill="none" stroke="#222"><path d="M2.500 4.500h7v7h-7zM9.500 7l3-2v6l-3-2M2 2q4-2 9 0M2 14q4 2 9 0" /></svg>
        <svg className="w-[17px] h-[15px]" viewBox="0 0 17 15"><path d="M4 12a4 4 0 0 1-1-7 5 5 0 0 1 9-1q4 1 4 5l-4 3z" fill="#9a9a9a" /><circle cx="12" cy="10" r="5" fill="#1670c4" /><path d="M12 9v4M12 6.500v1.200" stroke="#fff" strokeWidth="1.500" /></svg>
        <svg className="w-[14px] h-[14px]" viewBox="0 0 14 14" fill="none" stroke="#333"><path d="M1 13Q2 2 13 1M4 13q1-7 9-8M7 13q1-4 6-5M10 13q1-2 3-2" /></svg>
        <svg className="w-[17px] h-[12px]" viewBox="0 0 17 12" fill="none" stroke="#333"><path d="M1 4h2l3-3v10L3 8H1zM8 4q2 2 0 4M10.500 2.500q3 3.500 0 7M13 1q4 5 0 10" /></svg>
      </div>
      <button className="w-[29px] text-[11px] text-left">ESP</button>
      <div className="w-[60px] text-center text-[11px] leading-[16px]"><div>11:48 p. m.</div><div>28/12/2025</div></div>
      <IconButton label="Notificaciones" className="w-[36px] pl-[12px]">
        <svg className="w-[24px] h-[24px]" viewBox="0 0 24 24"><path d="M1 3h15v12H7l-3 3v-3H1z" fill="#1a1a1a" /><path d="M3 6h11M3 9h11M3 12h7" stroke="#eee" /><circle cx="16" cy="16" r="7" fill="#cfcfcf" stroke="#777" /><text x="16" y="20" fontSize="11" textAnchor="middle" fill="#222" fontFamily="Roboto, sans-serif">3</text></svg>
      </IconButton>
    </div>
  </footer>
);

export default function App() {
  return (
    <div className="relative flex flex-col h-screen overflow-hidden bg-black font-['Roboto',sans-serif]">
      <div className="flex flex-col flex-1 min-h-0 mx-px">
        <TitleBar />
        <MenuTabs />
        <Ribbon />
        <DocTabs />
        <div className="h-[4px] shrink-0 bg-[#3b4453]" />
        <main className="flex flex-1 min-h-0">
          <div className="relative flex-1 overflow-hidden bg-white">
            <Drawing />
            <div className="absolute left-[3px] top-[5px] text-[11px] text-[#222]">[−][Superior][Estructura alámbrica 2D]</div>
          </div>
          <SideToolbar />
        </main>
        <CommandLine />
        <StatusBar />
        <Taskbar />
      </div>
      <Dialog />
    </div>
  );
}
